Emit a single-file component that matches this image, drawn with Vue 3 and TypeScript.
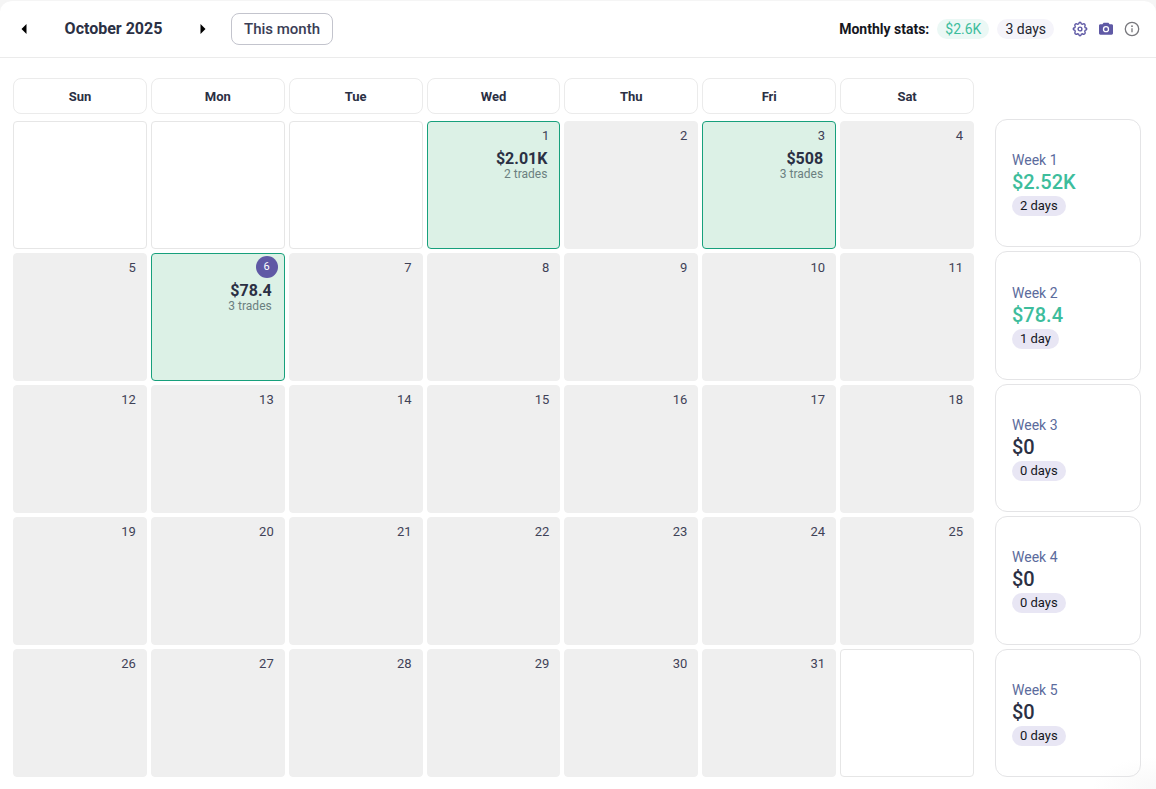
<script setup lang="ts">
interface Day {
  day: number | null
  pnl?: string
  trades?: string
  today?: boolean
}

interface Week {
  name: string
  total: string
  days: string
  gain: boolean
}

const weekdays: string[] = ['Sun', 'Mon', 'Tue', 'Wed', 'Thu', 'Fri', 'Sat']

const results: Record<number, Omit<Day, 'day'>> = {
  1: { pnl: '$2.01K', trades: '2 trades' },
  3: { pnl: '$508', trades: '3 trades' },
  6: { pnl: '$78.4', trades: '3 trades', today: true },
}

const firstWeekday = 3
const daysInMonth = 31

const rows: Day[][] = Array.from({ length: 5 }, (_, r) =>
  Array.from({ length: 7 }, (_, c) => {
    const n = r * 7 + c - firstWeekday + 1
    return n < 1 || n > daysInMonth ? { day: null } : { day: n, ...results[n] }
  }),
)

const weeks: Week[] = [
  { name: 'Week 1', total: '$2.52K', days: '2 days', gain: true },
  { name: 'Week 2', total: '$78.4', days: '1 day', gain: true },
  { name: 'Week 3', total: '$0', days: '0 days', gain: false },
  { name: 'Week 4', total: '$0', days: '0 days', gain: false },
  { name: 'Week 5', total: '$0', days: '0 days', gain: false },
]
</script>

<template>
  <main class="card">
    <header class="bar">
      <nav class="month-nav" aria-label="Month">
        <button class="arrow" type="button" aria-label="Previous month">
          <svg width="6" height="10" viewBox="0 0 6 10"><path d="M5.500 0v10L0.500 5z" /></svg>
        </button>
        <h1 class="month">October 2025</h1>
        <button class="arrow" type="button" aria-label="Next month">
          <svg width="6" height="10" viewBox="0 0 6 10"><path d="M0.500 0v10L5.500 5z" /></svg>
        </button>
        <button class="this-month" type="button">This month</button>
      </nav>
      <div class="stats">
        <span class="stats-label">Monthly stats:</span>
        <span class="chip chip-gain">$2.6K</span>
        <span class="chip chip-days">3 days</span>
        <div class="tools">
          <button class="tool" type="button" aria-label="Settings">
            <svg width="16" height="16" viewBox="0 0 16 16" fill="none" stroke="#5f59a5" stroke-width="1.4" stroke-linejoin="round">
              <path d="M6.800 2.700Q7 1.200 8 1.200T9.200 2.700Q9.800 3.200 10.600 3.200Q12 2.300 12.800 3.200T12.800 5.400Q12.800 6.200 13.300 6.800Q14.800 7 14.800 8T13.300 9.200Q12.800 9.800 12.800 10.600Q13.700 12 12.800 12.800T10.600 12.800Q9.800 12.800 9.200 13.300Q9 14.800 8 14.800T6.800 13.300Q6.200 12.800 5.400 12.800Q4 13.700 3.200 12.800T3.200 10.600Q3.200 9.800 2.700 9.200Q1.200 9 1.200 8T2.700 6.800Q3.200 6.200 3.200 5.400Q2.300 4 3.200 3.200T5.400 3.200Q6.200 3.200 6.800 2.700z" />
              <circle cx="8" cy="8" r="1.900" />
            </svg>
          </button>
          <button class="tool" type="button" aria-label="Take a snapshot">
            <svg width="16" height="16" viewBox="0 0 16 16">
              <path fill="#5f59a5" d="M5.600 1.800h4.800l1.200 1.500h2c.800 0 1.400.600 1.400 1.400v7.600c0 .800-.600 1.400-1.400 1.400H2.400c-.800 0-1.400-.600-1.400-1.400V4.700c0-.800.600-1.400 1.400-1.400h2z" />
              <circle cx="8" cy="8.200" r="2.500" fill="none" stroke="#fff" stroke-width="1.300" />
            </svg>
          </button>
          <button class="tool" type="button" aria-label="Information">
            <svg width="16" height="16" viewBox="0 0 16 16">
              <circle cx="8" cy="8" r="6.700" fill="none" stroke="#77777c" stroke-width="1.300" />
              <path d="M8 7.200v4" stroke="#77777c" stroke-width="1.300" />
              <circle cx="8" cy="5.200" r="0.900" fill="#77777c" />
            </svg>
          </button>
        </div>
      </div>
    </header>

    <div class="body">
      <table class="calendar">
        <thead>
          <tr>
            <th v-for="w in weekdays" :key="w" scope="col">{{ w }}</th>
          </tr>
        </thead>
        <tbody>
          <tr v-for="(row, r) in rows" :key="r">
            <td v-for="(d, c) in row" :key="c" :class="{ blank: d.day === null, win: d.pnl }">
              <span v-if="d.day !== null" class="num" :class="{ today: d.today }">{{ d.day }}</span>
              <div v-if="d.pnl" class="result">
                <strong>{{ d.pnl }}</strong>
                <span>{{ d.trades }}</span>
              </div>
            </td>
          </tr>
        </tbody>
      </table>

      <aside class="weeks" aria-label="Weekly totals">
        <section v-for="w in weeks" :key="w.name" class="week">
          <h2>{{ w.name }}</h2>
          <p class="total" :class="{ gain: w.gain }">{{ w.total }}</p>
          <span class="pill">{{ w.days }}</span>
        </section>
      </aside>
    </div>
  </main>
</template>

<style>
html {
  background: #f5f5f5;
}
body {
  margin: 0;
}
</style>

<style scoped>
.card {
  box-sizing: border-box;
  min-height: 100vh;
  border-top: 1px solid #f5f5f5;
  border-radius: 12px 12px 0 0;
  background: radial-gradient(64px 32px at 100% 100%, #f8f8f8, #fff);
  background-clip: padding-box;
  color: #2b3044;
  font-family: Roboto, "Liberation Sans", sans-serif;
}
button {
  padding: 0;
  border: 0;
  background: none;
  color: inherit;
  font: inherit;
  cursor: pointer;
}
svg {
  display: block;
}
.bar {
  display: flex;
  align-items: center;
  justify-content: space-between;
  height: 56px;
  padding: 0 16px 0 12px;
  border-bottom: 1px solid #ebebeb;
}
.month-nav,
.stats,
.tools {
  display: flex;
  align-items: center;
}
.arrow {
  display: grid;
  place-items: center;
  width: 24px;
  height: 24px;
}
.month {
  width: 155px;
  margin: 0;
  font-size: 16px;
  font-weight: 700;
  line-height: 26px;
  text-align: center;
}
.this-month {
  height: 32px;
  margin-left: 16px;
  padding: 0 12px;
  border: 1px solid #c3c4cd;
  border-radius: 8px;
  color: #3a3d55;
  font-size: 15px;
  font-weight: 500;
}
.stats {
  gap: 8px;
  font-size: 14px;
  line-height: 20px;
}
.stats-label {
  color: #15161d;
  font-weight: 700;
}
.chip {
  padding: 0 8px;
  border-radius: 10px;
  color: #23242e;
}
.chip-days {
  background: #f5f4fa;
}
.chip-gain {
  background: #ebf8f5;
  color: #3dbd9c;
}
.tools {
  gap: 10px;
  margin-left: 10px;
}
.body {
  display: flex;
  gap: 21px;
  padding: 20px 15px 12px 13px;
}
.calendar {
  display: flex;
  flex: 1;
  flex-direction: column;
  gap: 7px;
}
.calendar tbody {
  display: grid;
  gap: 4px;
}
.calendar tr {
  display: grid;
  grid-template-columns: repeat(7, minmax(0, 1fr));
  gap: 4px;
}
.calendar th {
  padding: 8px 0 6px;
  border: 1px solid #ebebeb;
  border-radius: 8px;
  font-size: 13px;
  font-weight: 700;
  line-height: 20px;
  text-align: center;
}
.calendar td {
  box-sizing: border-box;
  display: flex;
  flex-direction: column;
  align-items: flex-end;
  height: 128px;
  padding: 3px 10px 0;
  border: 1px solid #efefef;
  border-radius: 4px;
  background: #efefef;
}
.calendar td.blank {
  border-color: #e6e6e6;
  background: #fff;
}
.calendar td.win {
  border-color: #17a07c;
  background: #dcf1e6;
}
.num {
  color: #3f4257;
  font-size: 13px;
  line-height: 22px;
}
.num.today {
  width: 22px;
  margin: -1px -4px 1px 0;
  border-radius: 50%;
  background: #5f59a5;
  color: #fff;
  font-size: 11px;
  text-align: center;
}
.result {
  display: flex;
  flex-direction: column;
  align-items: flex-end;
  padding: 3px 2px 0 0;
}
.result strong {
  font-size: 16px;
  font-weight: 700;
  line-height: 18px;
}
.result span {
  color: #6b7f80;
  font-size: 12px;
  line-height: 12px;
}
.weeks {
  display: flex;
  flex-direction: column;
  gap: 4px;
  width: 146px;
  padding-top: 41px;
  box-sizing: border-box;
}
.week {
  display: flex;
  flex: 1;
  flex-direction: column;
  align-items: flex-start;
  justify-content: center;
  padding: 0 16px;
  border: 1px solid #e4e4e6;
  border-radius: 12px;
}
.week h2 {
  margin: 0;
  color: #5b6b9c;
  font-size: 14px;
  font-weight: 400;
  line-height: 20px;
}
.total {
  margin: 0 0 2px;
  font-size: 20px;
  font-weight: 500;
  line-height: 24px;
}
.total.gain {
  color: #3dbd9c;
}
.pill {
  padding: 0 8px;
  border-radius: 10px;
  background: #e8e6f4;
  color: #15161d;
  font-size: 13px;
  line-height: 20px;
}
</style>
